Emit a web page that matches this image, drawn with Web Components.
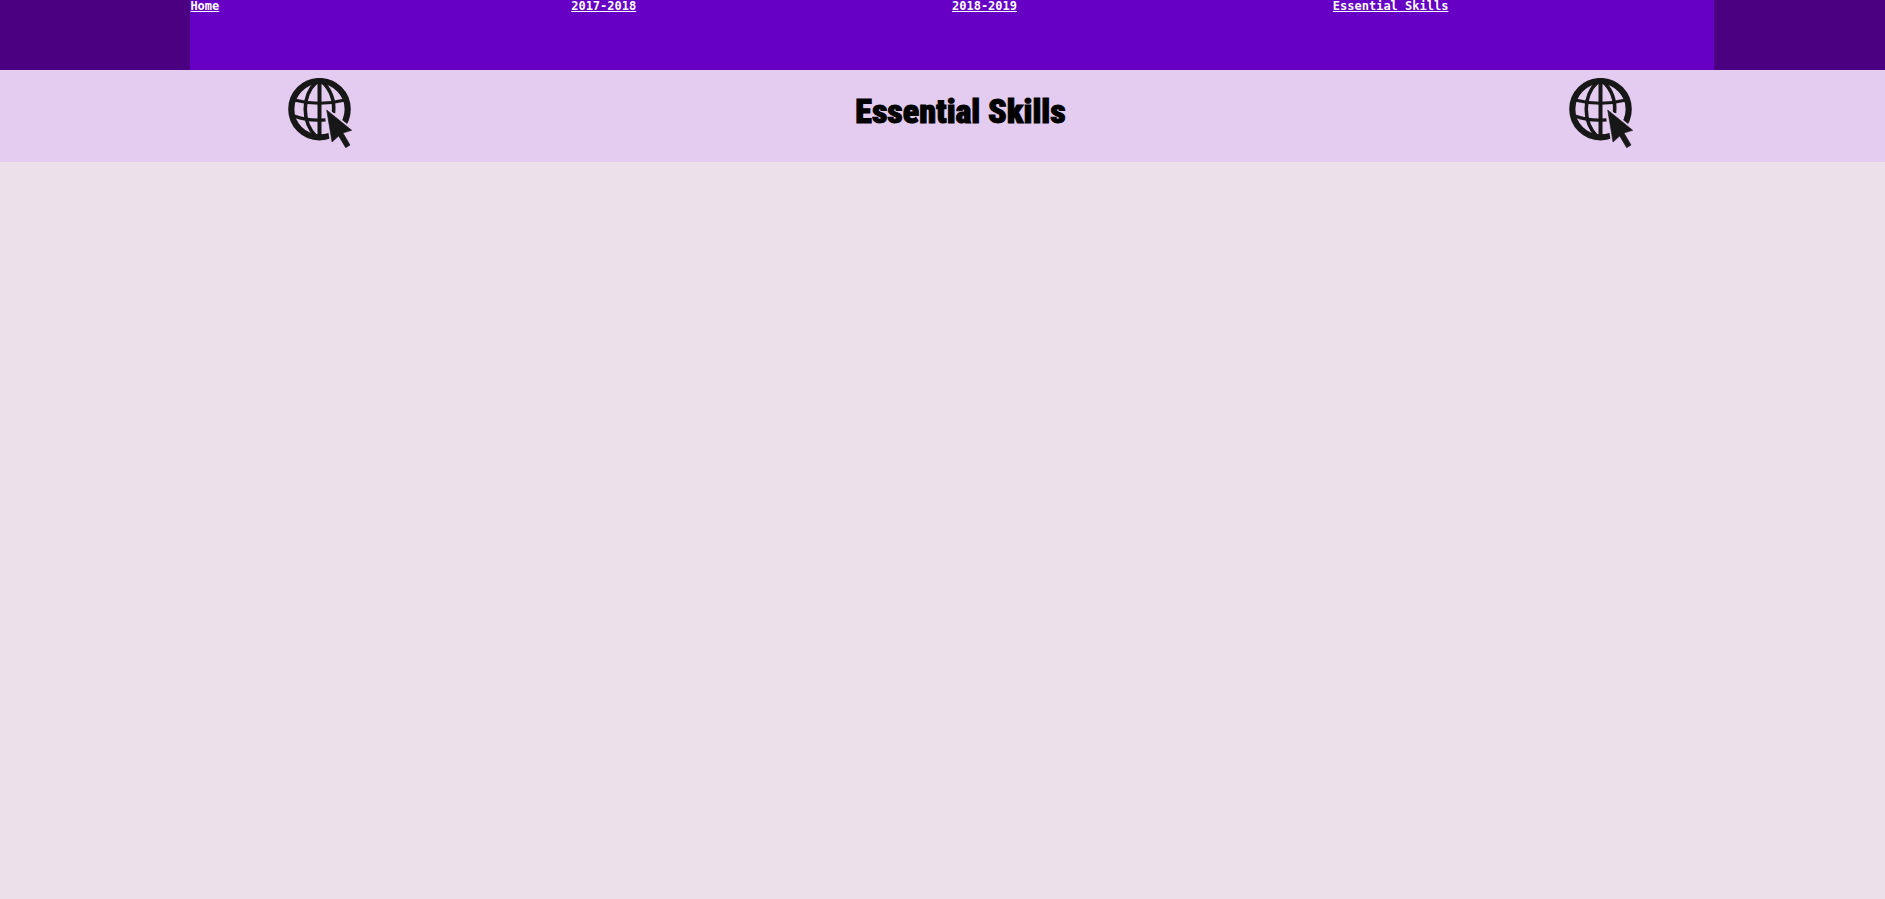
<!DOCTYPE html>
<html lang="en">
<head>
<meta charset="utf-8">
<title>Essential Skills</title>
<style>
  body { margin: 0; background: #ece0ea; }
</style>
</head>
<body>
<site-nav>
  <nav-link href="#home">Home</nav-link>
  <nav-link href="#2017-2018">2017-2018</nav-link>
  <nav-link href="#2018-2019">2018-2019</nav-link>
  <nav-link href="#essential-skills">Essential Skills</nav-link>
</site-nav>
<page-banner>Essential Skills</page-banner>

<script>
  class SiteNav extends HTMLElement {
    constructor() {
      super();
      this.attachShadow({ mode: 'open' }).innerHTML = `
        <style>
          :host { display: grid; grid-template-columns: 10fr 80fr 9fr; background: #4b0082; }
          nav { grid-column: 2; display: grid; grid-template-columns: repeat(4, 1fr); align-items: start; min-height: 70px; background: #6600c5; }
        </style>
        <nav><slot></slot></nav>`;
    }
  }

  class NavLink extends HTMLElement {
    constructor() {
      super();
      this.attachShadow({ mode: 'open' }).innerHTML = `
        <style>
          :host { display: block; font: bold 12px/13px "DejaVu Sans Mono", monospace; }
          a { color: #fff; text-underline-offset: 1px; text-decoration-thickness: 1px; }
        </style>
        <a><slot></slot></a>`;
    }
    connectedCallback() {
      this.shadowRoot.querySelector('a').href = this.getAttribute('href');
    }
  }

  class GlobeIcon extends HTMLElement {
    constructor() {
      super();
      this.attachShadow({ mode: 'open' }).innerHTML = `
        <style>
          :host { display: block; }
          svg { display: block; }
        </style>
        <svg width="66" height="70" viewBox="0 0 66 70" fill="none" stroke="#171717" aria-hidden="true">
          <mask id="gap" maskUnits="userSpaceOnUse" x="0" y="0" width="66" height="70">
            <path d="M0 0H66V70H0Z" fill="#fff" stroke="none"/>
            <path d="M39.7 32L64.7 52.3L56 55L63 67L58.7 69.7L51.7 58L45 64Z" fill="#000" stroke="#000" stroke-width="4"/>
          </mask>
          <g mask="url(#gap)">
            <circle cx="32.5" cy="31.2" r="28.2" stroke-width="6.2"/>
            <path d="M32.5 3V60" stroke-width="4"/>
            <path d="M29.5 4C14.500 18 14.500 44 29.500 59M35.500 4C46 14 47.500 25 46.500 35" stroke-width="3.600"/>
            <path d="M7 22Q32.500 28.500 58 22M7 38Q22 43.500 38.500 41.800" stroke-width="3.200"/>
          </g>
          <path d="M39.7 32L64.7 52.3L56 55L63 67L58.7 69.7L51.7 58L45 64Z" fill="#171717" stroke="#171717" stroke-width=".6"/>
        </svg>`;
    }
  }

  class PageBanner extends HTMLElement {
    constructor() {
      super();
      this.attachShadow({ mode: 'open' }).innerHTML = `
        <style>
          :host { display: block; background: #e4ccf1; }
          header { display: grid; grid-template-columns: 8fr auto 14fr auto 14fr auto 7fr; align-items: start; padding: 8px 0 14px; }
          globe-icon:first-child { grid-column: 2; }
          h1 { grid-column: 4; margin: 13px 0 0; font: 900 34px/40px "Roboto Condensed", Roboto, sans-serif; color: #000; -webkit-text-stroke: 1px #000; white-space: nowrap; }
          globe-icon:last-child { grid-column: 6; }
        </style>
        <header>
          <globe-icon></globe-icon>
          <h1><slot></slot></h1>
          <globe-icon></globe-icon>
        </header>`;
    }
  }

  customElements.define('site-nav', SiteNav);
  customElements.define('nav-link', NavLink);
  customElements.define('globe-icon', GlobeIcon);
  customElements.define('page-banner', PageBanner);
</script>
</body>
</html>
